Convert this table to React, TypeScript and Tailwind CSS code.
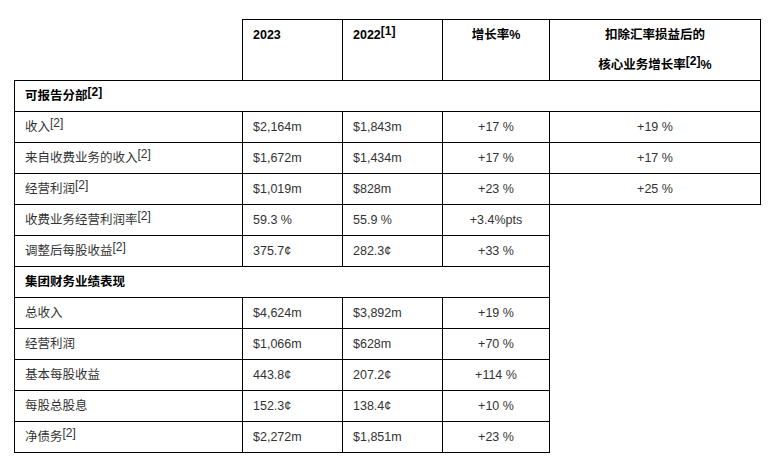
import type { ReactNode } from "react";

type Row = { label: ReactNode; a: string; b: string; growth: string; core?: string };

const Sup = ({ bold }: { bold?: boolean }) => (
  <sup className={`text-[12px] leading-none top-[-4px] ${bold ? "font-bold" : ""}`}>[2]</sup>
);

const segmentRows: Row[] = [
  { label: <>收入<Sup /></>, a: "$2,164m", b: "$1,843m", growth: "+17 %", core: "+19 %" },
  { label: <>来自收费业务的收入<Sup /></>, a: "$1,672m", b: "$1,434m", growth: "+17 %", core: "+17 %" },
  { label: <>经营利润<Sup /></>, a: "$1,019m", b: "$828m", growth: "+23 %", core: "+25 %" },
  { label: <>收费业务经营利润率<Sup /></>, a: "59.3 %", b: "55.9 %", growth: "+3.4%pts" },
  { label: <>调整后每股收益<Sup /></>, a: "375.7¢", b: "282.3¢", growth: "+33 %" },
];

const groupRows: Row[] = [
  { label: "总收入", a: "$4,624m", b: "$3,892m", growth: "+19 %" },
  { label: "经营利润", a: "$1,066m", b: "$628m", growth: "+70 %" },
  { label: "基本每股收益", a: "443.8¢", b: "207.2¢", growth: "+114 %" },
  { label: "每股总股息", a: "152.3¢", b: "138.4¢", growth: "+10 %" },
  { label: <>净债务<Sup /></>, a: "$2,272m", b: "$1,851m", growth: "+23 %" },
];

const td = "border border-black px-[10px] py-0 h-[31px] align-middle";

function DataRow({ row }: { row: Row }) {
  return (
    <tr>
      <td className={td}>{row.label}</td>
      <td className={td}>{row.a}</td>
      <td className={td}>{row.b}</td>
      <td className={`${td} text-center`}>{row.growth}</td>
      {row.core && <td className={`${td} text-center`}>{row.core}</td>}
    </tr>
  );
}

export default function App() {
  return (
    <div
      className="w-[776px] h-[474px] bg-white pt-[19px] pl-[14px] text-[#333] text-[12.5px] leading-[30px]"
      style={{ fontFamily: '"Liberation Sans", Arial, "Noto Sans CJK SC", sans-serif' }}
    >
      <table className="table-fixed border-collapse w-[746px]">
        <colgroup>
          <col className="w-[228px]" />
          <col className="w-[100px]" />
          <col className="w-[100px]" />
          <col className="w-[107px]" />
          <col className="w-[211px]" />
        </colgroup>
        <thead>
          <tr className="text-black font-bold">
            <th className="p-0" />
            <th className="border border-black px-[10px] py-0 text-left align-top">2023</th>
            <th className="border border-black px-[10px] py-0 text-left align-top">
              2022<sup className="text-[12px] leading-none top-[-4px]">[1]</sup>
            </th>
            <th className="border border-black px-[10px] py-0 text-center align-top">增长率%</th>
            <th className="border border-black px-[10px] py-0 text-center align-top">
              <div>扣除汇率损益后的</div>
              <div>
                核心业务增长率<Sup bold />%
              </div>
            </th>
          </tr>
        </thead>
        <tbody>
          <tr>
            <td colSpan={5} className={`${td} font-bold text-black`}>
              可报告分部<Sup bold />
            </td>
          </tr>
          {segmentRows.map((r, i) => (
            <DataRow key={i} row={r} />
          ))}
          <tr>
            <td colSpan={4} className={`${td} font-bold text-black`}>
              集团财务业绩表现
            </td>
          </tr>
          {groupRows.map((r, i) => (
            <DataRow key={i} row={r} />
          ))}
        </tbody>
      </table>
    </div>
  );
}
